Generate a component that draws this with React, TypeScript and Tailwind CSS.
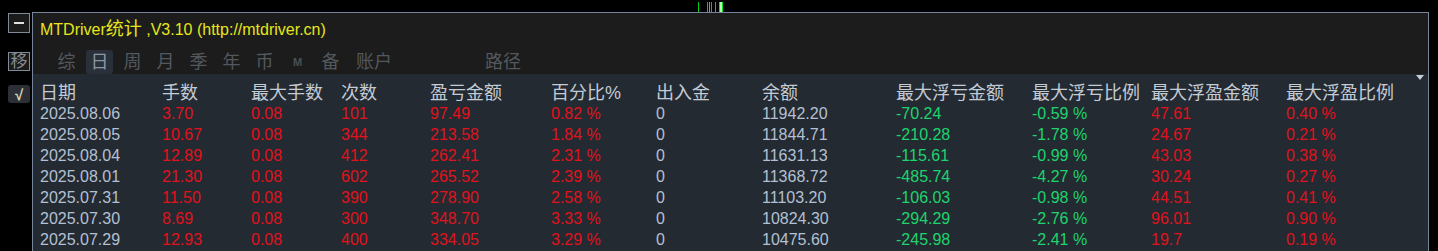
import React from 'react';

type Row = {
    date: string;
    lots: string;
    maxLots: string;
    count: string;
    pnl: string;
    pct: string;
    io: string;
    balance: string;
    ddAmt: string;
    ddPct: string;
    fpAmt: string;
    fpPct: string;
};

const rows: Row[] = [
    { date: '2025.08.06', lots: '3.70', maxLots: '0.08', count: '101', pnl: '97.49', pct: '0.82 %', io: '0', balance: '11942.20', ddAmt: '-70.24', ddPct: '-0.59 %', fpAmt: '47.61', fpPct: '0.40 %' },
    { date: '2025.08.05', lots: '10.67', maxLots: '0.08', count: '344', pnl: '213.58', pct: '1.84 %', io: '0', balance: '11844.71', ddAmt: '-210.28', ddPct: '-1.78 %', fpAmt: '24.67', fpPct: '0.21 %' },
    { date: '2025.08.04', lots: '12.89', maxLots: '0.08', count: '412', pnl: '262.41', pct: '2.31 %', io: '0', balance: '11631.13', ddAmt: '-115.61', ddPct: '-0.99 %', fpAmt: '43.03', fpPct: '0.38 %' },
    { date: '2025.08.01', lots: '21.30', maxLots: '0.08', count: '602', pnl: '265.52', pct: '2.39 %', io: '0', balance: '11368.72', ddAmt: '-485.74', ddPct: '-4.27 %', fpAmt: '30.24', fpPct: '0.27 %' },
    { date: '2025.07.31', lots: '11.50', maxLots: '0.08', count: '390', pnl: '278.90', pct: '2.58 %', io: '0', balance: '11103.20', ddAmt: '-106.03', ddPct: '-0.98 %', fpAmt: '44.51', fpPct: '0.41 %' },
    { date: '2025.07.30', lots: '8.69', maxLots: '0.08', count: '300', pnl: '348.70', pct: '3.33 %', io: '0', balance: '10824.30', ddAmt: '-294.29', ddPct: '-2.76 %', fpAmt: '96.01', fpPct: '0.90 %' },
    { date: '2025.07.29', lots: '12.93', maxLots: '0.08', count: '400', pnl: '334.05', pct: '3.29 %', io: '0', balance: '10475.60', ddAmt: '-245.98', ddPct: '-2.41 %', fpAmt: '19.7', fpPct: '0.19 %' },
];

const headers = ['日期', '手数', '最大手数', '次数', '盈亏金额', '百分比%', '出入金', '余额', '最大浮亏金额', '最大浮亏比例', '最大浮盈金额', '最大浮盈比例'];

const grid = 'grid grid-cols-[122px_89px_90px_89px_121px_105px_106px_134px_136px_119px_135px_1fr]';

const tabs = ['综', '日', '周', '月', '季', '年', '币'];

export default function App() {
    return (
        <div
            className="w-[1438px] h-[251px] bg-black overflow-hidden flex flex-col"
            style={{ fontFamily: '"Liberation Sans", "Noto Sans CJK SC", sans-serif' }}
        >
            {/* top strip with the little green ticks */}
            <div className="h-[12px] shrink-0 pl-[697px]">
                <svg width="30" height="12" viewBox="0 0 30 12">
                    <rect x="1" y="2" width="1" height="10" fill="#00d010" />
                    <rect x="10" y="2" width="1" height="10" fill="#00d010" />
                    <rect x="12" y="2" width="1" height="10" fill="#30e030" />
                    <rect x="14" y="2" width="1" height="10" fill="#00d010" />
                    <rect x="18" y="2" width="1" height="10" fill="#00d010" />
                    <rect x="22" y="2" width="1" height="10" fill="#10e020" />
                    <rect x="23" y="2" width="2" height="10" fill="#b0ffb0" />
                    <rect x="25" y="2" width="1" height="10" fill="#10e020" />
                </svg>
            </div>

            <div className="flex flex-1 min-h-0">
                {/* left side buttons */}
                <div className="w-[32px] shrink-0 flex flex-col pl-[8px] pt-[1px]">
                    <div className="w-[22px] h-[20px] border border-[#7f8b99] bg-[#1b1b1b] flex items-center justify-center">
                        <div className="w-[10px] h-[2px] bg-[#e0e0e0]" />
                    </div>
                    <div className="w-[22px] h-[19px] mt-[19px] border border-[#7f8b99] bg-[#1b1b1b] flex items-center justify-center text-[17px] leading-none text-[#8a8e94] overflow-hidden">
                        移
                    </div>
                    <div className="w-[22px] h-[18px] mt-[14px] rounded-[3px] bg-[#2c3036] flex items-center justify-center text-[15px] leading-none text-[#d8d6b8] font-bold">
                        √
                    </div>
                </div>

                {/* main panel */}
                <div className="w-[1397px] shrink-0 border border-[#76859a] border-b-0 flex flex-col relative">
                    <div className="h-[61px] bg-[#1c1c1c] shrink-0 flex flex-col">
                        <div className="pl-[7px] pt-[7px] text-[16px] leading-[18px] text-[#e6e61a] whitespace-nowrap">
                            MTDriver<span className="text-[18px]">统计</span> ,V3.10 (http://mtdriver.cn)
                        </div>
                        <div className="flex items-center pl-[20px] mt-[11px] h-[24px] gap-[6px] text-[18px] text-[#53585e]">
                            {tabs.map((t) => (
                                <div
                                    key={t}
                                    className={
                                        t === '日'
                                            ? 'w-[27px] h-[24px] flex items-center justify-center rounded-[3px] bg-[#29303a] text-[#8b96a4]'
                                            : 'w-[27px] h-[24px] flex items-center justify-center'
                                    }
                                >
                                    {t}
                                </div>
                            ))}
                            <div className="w-[27px] h-[24px] flex items-center justify-center text-[11px] font-bold text-[#4a5056]">M</div>
                            <div className="w-[27px] h-[24px] flex items-center justify-center">备</div>
                            <div className="w-[44px] h-[24px] flex items-center justify-center ml-[2px]">账户</div>
                            <div className="h-[24px] flex items-center ml-[83px]">路径</div>
                        </div>
                    </div>

                    <div className="flex-1 bg-[#232a32] pt-[9px] pl-[7px]">
                        <div className={`${grid} h-[20px] text-[18px] leading-[20px] text-[#c3cbd5]`}>
                            {headers.map((h) => (
                                <div key={h} className="whitespace-nowrap">{h}</div>
                            ))}
                        </div>
                        {rows.map((r) => (
                            <div key={r.date} className={`${grid} h-[21px] text-[16px] leading-[21px] whitespace-nowrap`}>
                                <div className="text-[#b3c0d2]">{r.date}</div>
                                <div className="text-[#e0121c]">{r.lots}</div>
                                <div className="text-[#e0121c]">{r.maxLots}</div>
                                <div className="text-[#e0121c]">{r.count}</div>
                                <div className="text-[#e0121c]">{r.pnl}</div>
                                <div className="text-[#e0121c]">{r.pct}</div>
                                <div className="text-[#b3c0d2]">{r.io}</div>
                                <div className="text-[#b3c0d2]">{r.balance}</div>
                                <div className="text-[#1ed46c]">{r.ddAmt}</div>
                                <div className="text-[#1ed46c]">{r.ddPct}</div>
                                <div className="text-[#e0121c]">{r.fpAmt}</div>
                                <div className="text-[#e0121c]">{r.fpPct}</div>
                            </div>
                        ))}
                    </div>

                    {/* scroll arrow */}
                    <div className="absolute right-[4px] top-[62px] w-0 h-0 border-l-[4px] border-r-[4px] border-t-[5px] border-l-transparent border-r-transparent border-t-[#c8cdd4]" />
                </div>
            </div>
        </div>
    );
}
